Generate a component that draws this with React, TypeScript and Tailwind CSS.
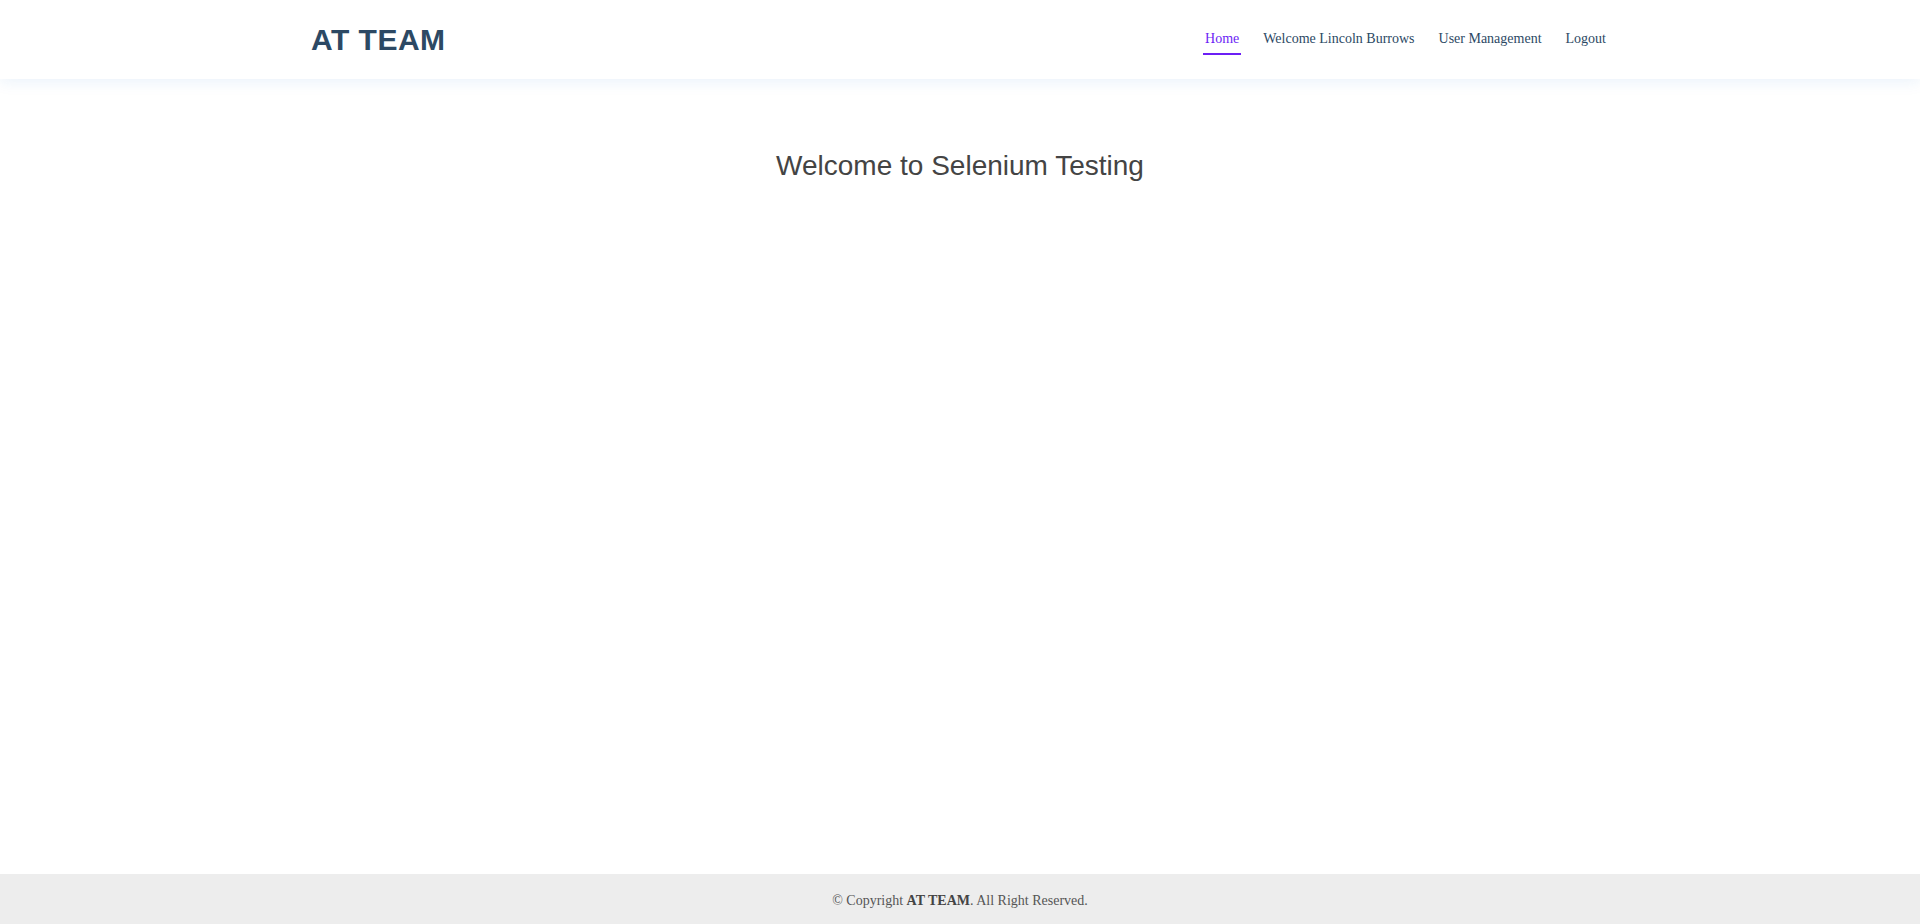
const navLinks = ['Home', 'Welcome Lincoln Burrows', 'User Management', 'Logout'];

export default function App() {
  return (
    <div className="flex min-h-screen flex-col bg-white">
      <header className="relative z-10 h-[79px] bg-white shadow-[0_2px_15px_rgba(25,119,204,0.1)]">
        <div className="mx-auto flex h-full max-w-[1320px] items-center justify-between px-3">
          <h1 className="ml-[-1px] pt-[1px] font-['Liberation_Sans',Arial,sans-serif] text-[30px] font-bold leading-none tracking-[0.5px] text-[#2c4964]">
            AT TEAM
          </h1>
          <nav className="flex items-center gap-6 pr-[2px] font-['Liberation_Serif','Times_New_Roman',serif] text-[14px]">
            {navLinks.map((label, i) => (
              <a
                key={label}
                href="#"
                className={
                  i === 0
                    ? 'relative pt-[2px] pb-[4px] text-[#6c1ff5] after:absolute after:left-[-2px] after:right-[-2px] after:top-[27px] after:h-[2px] after:bg-[#6c1ff5]'
                    : 'pt-[2px] pb-[4px] text-[#2c4964]'
                }
              >
                {label}
              </a>
            ))}
          </nav>
        </div>
      </header>

      <main className="flex-1">
        <h2 className="mt-[70px] text-center font-['Liberation_Sans',Arial,sans-serif] text-[28px] leading-[1.2] text-[#444444]">
          Welcome to Selenium Testing
        </h2>
      </main>

      <footer className="flex h-[50px] items-center justify-center bg-[#ededed] font-['Liberation_Serif','Times_New_Roman',serif] text-[14px] text-[#555555]">
        <p className="pt-[2px]">
          © Copyright <strong className="text-[#444444]">AT TEAM</strong>. All Right Reserved.
        </p>
      </footer>
    </div>
  );
}
